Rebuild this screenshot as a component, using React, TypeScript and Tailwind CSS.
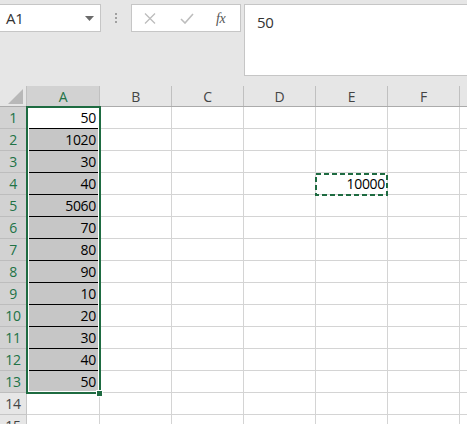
const values = ["50", "1020", "30", "40", "5060", "70", "80", "90", "10", "20", "30", "40", "50", "", ""];
const otherCols = ["B", "C", "D", "E", "F"];

function CaretDown() {
  return (
    <svg width="9" height="5" viewBox="0 0 9 5" className="ml-auto mr-[6px]">
      <path d="M0 0h9L4.5 5z" fill="#6b6b6b" />
    </svg>
  );
}

function FormulaBar() {
  return (
    <div className="h-[86px] bg-[#e6e6e6] flex items-start pt-[4px]">
      <div className="-ml-px w-[102px] h-[28px] border border-[#c6c6c6] bg-white flex items-center pl-[6px] text-[15px] text-[#333]">
        A1
        <CaretDown />
      </div>
      <div className="ml-[14px] mt-[9px] flex flex-col gap-[2px]">
        <div className="w-[2px] h-[2px] bg-[#a0a0a0]" />
        <div className="w-[2px] h-[2px] bg-[#a0a0a0]" />
        <div className="w-[2px] h-[2px] bg-[#a0a0a0]" />
      </div>
      <div className="ml-[14px] w-[110px] h-[28px] border border-[#c6c6c6] bg-white flex items-center">
        <svg width="12" height="11" viewBox="0 0 12 11" className="ml-[12px]">
          <path d="M1 0.5l10 10M11 0.5l-10 10" stroke="#bdbdbd" strokeWidth="1.3" fill="none" />
        </svg>
        <svg width="14" height="11" viewBox="0 0 14 11" className="ml-[24px]">
          <path d="M1 6l4 4 8-9" stroke="#bdbdbd" strokeWidth="1.6" fill="none" />
        </svg>
        <span className="ml-[22px] text-[14px] italic text-[#555] font-['Liberation_Serif',serif] tracking-[-0.5px]">fx</span>
      </div>
      <div className="ml-[3px] flex-1 -mr-px h-[72px] border border-[#c6c6c6] bg-white pl-[12px] pt-[6px] text-[15px] text-[#333]">
        50
      </div>
    </div>
  );
}

function HeaderRow() {
  return (
    <div className="flex h-[21px] bg-[#e6e6e6] border-b border-[#ababab] text-[14px] text-[#444]">
      <div className="w-[27px] border-r border-[#c0c0c0] flex items-end justify-end pr-[3px] pb-[2px]">
        <svg width="15" height="15" viewBox="0 0 15 15">
          <path d="M15 0V15H0z" fill="#b8b8b8" />
        </svg>
      </div>
      <div className="w-[73px] border-r border-[#c0c0c0] bg-[#d2d2d2] text-[#217346] flex items-center justify-center">A</div>
      {otherCols.map((c) => (
        <div key={c} className="w-[72px] border-r border-[#c0c0c0] flex items-center justify-center">
          {c}
        </div>
      ))}
      <div className="flex-1" />
    </div>
  );
}

function Row({ n, value }: { n: number; value: string }) {
  const selected = n <= 13;
  return (
    <div className="flex h-[22px] text-[14px]">
      <div
        className={
          selected
            ? "w-[27px] bg-[#d2d2d2] text-[#217346] border-r border-b border-[#bdbdbd] flex items-center justify-center"
            : "w-[27px] bg-[#e6e6e6] text-[#444] border-r border-b border-[#c6c6c6] flex items-center justify-center"
        }
      >
        {n}
      </div>
      <div
        className={
          n === 1
            ? "w-[73px] border-r border-b border-r-[#d4d4d4] border-b-black bg-white flex items-center justify-end pr-[3px] text-black"
            : n <= 12
            ? "w-[73px] border-r border-b border-r-[#d4d4d4] border-b-black bg-[#c6c6c6] flex items-center justify-end pr-[3px] text-black"
            : n === 13
            ? "w-[73px] border-r border-b border-[#d4d4d4] bg-[#c6c6c6] flex items-center justify-end pr-[3px] text-black"
            : "w-[73px] border-r border-b border-[#d4d4d4] bg-white"
        }
      >
        {value}
      </div>
      {otherCols.map((c) => (
        <div key={c} className="w-[72px] border-r border-b border-[#d4d4d4] flex items-center justify-end pr-[2px] text-black">
          {c === "E" && n === 4 ? "10000" : ""}
        </div>
      ))}
      <div className="flex-1 border-b border-[#d4d4d4]" />
    </div>
  );
}

export default function App() {
  return (
    <div className="w-[467px] h-[424px] overflow-hidden bg-white font-['Open_Sans','Segoe_UI',sans-serif] tracking-[-0.3px]">
      <FormulaBar />
      <div className="relative">
        <HeaderRow />
        {values.map((v, i) => (
          <Row key={i} n={i + 1} value={v} />
        ))}
        <div className="absolute left-[26px] top-[20px] w-[75px] h-[288px] border-2 border-[#1e6b41] shadow-[inset_0_0_0_1px_white] pointer-events-none" />
        <div className="absolute left-[96px] top-[304px] w-[7px] h-[7px] bg-[#1e6b41] border border-white" />
        <svg className="absolute left-[315px] top-[87px]" width="73" height="23" viewBox="0 0 73 23">
          <rect x="1" y="1" width="71" height="21" fill="none" stroke="#1e6b41" strokeWidth="2" strokeDasharray="5 3" />
        </svg>
      </div>
    </div>
  );
}
